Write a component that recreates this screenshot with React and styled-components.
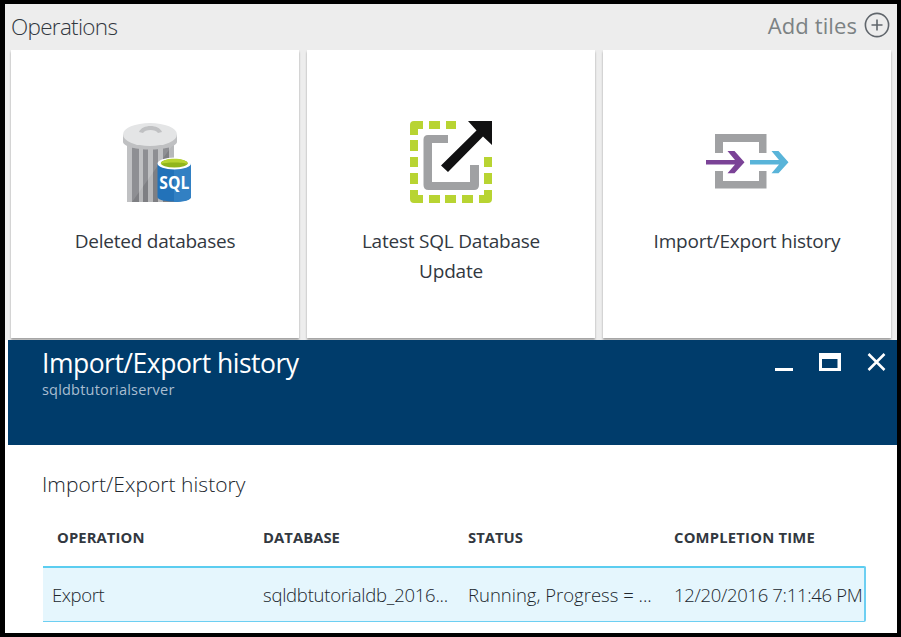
import React from 'react';
import styled, { createGlobalStyle } from 'styled-components';

const GlobalStyle = createGlobalStyle`
  * { box-sizing: border-box; }
  body { margin: 0; background: #000; font-family: "Open Sans", "Noto Sans", sans-serif; color: #32383f; }
`;

const Frame = styled.main`
  width: 901px;
  height: 637px;
  padding: 4px 4px 4px 5px;
  background: #000;
  overflow: hidden;
`;

const Screen = styled.div`
  height: 629px;
  display: flex;
  flex-direction: column;
  background: #fff;
`;

const Dashboard = styled.section`
  height: 336px;
  padding: 0 6px;
  background: #ededed;
  overflow: hidden;
`;

const Toolbar = styled.header`
  height: 46px;
  display: flex;
  justify-content: space-between;
  align-items: center;
`;

const Label = styled.span`
  display: block;
  white-space: nowrap;
  font-size: ${(p) => p.$size}px;
  line-height: ${(p) => p.$line || 30}px;
  font-weight: ${(p) => p.$weight || 400};
  letter-spacing: ${(p) => p.$track || 0}px;
  color: ${(p) => p.$color || '#32383f'};
`;

const AddTiles = styled.button`
  display: flex;
  align-items: center;
  gap: 7px;
  padding: 0;
  margin: -4px 1px 0 0;
  border: 0;
  background: none;
  font-family: inherit;
`;

const Tiles = styled.div`
  display: grid;
  grid-template-columns: repeat(3, 288px);
  gap: 8px;
`;

const Tile = styled.article`
  height: 288px;
  padding-top: 69px;
  display: flex;
  flex-direction: column;
  align-items: center;
  background: #fff;
  box-shadow: 0 2px 2px rgba(0, 0, 0, 0.32);
`;

const TileIcon = styled.div`
  height: 107px;
  svg { display: block; }
`;

const BladeHeader = styled.header`
  height: 105px;
  margin-left: 3px;
  padding: 7px 10px 0 34px;
  display: flex;
  justify-content: space-between;
  background: #003c6b;
`;

const WindowControls = styled.div`
  display: flex;
  align-items: flex-start;
  gap: 25px;
  padding-top: 5px;
`;

const Blade = styled.section`
  padding: 24px 31px 0 37px;
`;

const Table = styled.div`
  margin: 23px 0 0 1px;
`;

const HeadRow = styled.div`
  height: 44px;
  padding-left: 14px;
  display: grid;
  grid-template-columns: 206px 205px 206px 1fr;
`;

const DataRow = styled.div`
  height: 56px;
  padding: 12px 0 0 9px;
  display: grid;
  grid-template-columns: 211px 205px 206px 1fr;
  background: #e5f6fd;
  border: solid #6dcff2;
  border-width: 2px 2px 1px 0;
  border-top-color: #5bcdf0;
  border-radius: 0 2px 2px 0;
`;

const TrashIcon = () => (
  <svg width="72" height="84" viewBox="119 119 72 84">
    <path d="M127 141h47v61h-47z" fill="#7e7f83" />
    <path d="M127 141h5v61h-5zM139 147h4v55h-4zM148 148h5v54h-5zM158 147h5v55h-5zM169 141h5v20h-5z" fill="#b7b8ba" />
    <path d="M127 141h47v2l-42 59h-5z" fill="#fff" opacity=".13" />
    <path d="M123 135v7c2 10 52 10 54 0v-7z" fill="#bfc0c2" />
    <ellipse cx="150" cy="134.5" rx="27" ry="11.5" fill="#e4e5e6" />
    <path d="M139 132c3-8 20-8 23 0l-4 1c-2-4-13-4-15 0z" fill="#c0c1c3" />
    <path d="M157.500 163v34c0 6 33.500 6 33.500 0v-34z" fill="#2272b9" />
    <path d="M174 163h17v34c0 3-7 5-17 5z" fill="#3280c3" />
    <ellipse cx="174.3" cy="163.5" rx="16.700" ry="6" fill="#fff" />
    <ellipse cx="174.3" cy="163.2" rx="13.500" ry="4.200" fill="#91b51b" />
    <path d="M161 164c0-7 26.500-7 26.500 0-5-2-21.500-2-26.500 0z" fill="#b8d432" />
    <text x="174.3" y="189" textAnchor="middle" textLength="30" lengthAdjust="spacingAndGlyphs" fontSize="17" fontWeight="700" fill="#fff">SQL</text>
  </svg>
);

const UpdateIcon = () => (
  <svg width="84" height="84" viewBox="409 119 84 84">
    <g fill="#b8d432">
      <path d="M423 121h-9q-4 0-4 4v10h8v-6h5zM429 121h11v8h-11zM446 121h10v8h-10z" />
      <path d="M410 140h8v11h-8zM410 157h8v10h-8zM410 173h8v11h-8zM410 190h8v5h5v8h-9q-4 0-4-4z" />
      <path d="M429 195h11v8h-11zM445 195h11v8h-11zM462 195h11v8h-11zM484 190h8v9q0 4-4 4h-9v-8h5zM484 157h8v10h-8zM484 173h8v11h-8z" />
    </g>
    <path d="M448 135h-20q-4.500 0-4.500 4.500v45.500q0 5 5 5h45.500q5 0 5-5v-20h-9v17h-38v-39h16z" fill="#a0a1a3" />
    <path d="M468 121h24v24l-9-8.500-35 35.500-7-6.500 35.500-35z" fill="#111112" />
  </svg>
);

const TransferIcon = () => (
  <svg width="84" height="84" viewBox="705 119 84 84">
    <path d="M715 153v-19h51.500v19h-7.500v-11h-36v11zM715 171v17.500h51.500V171h-7.500v10h-36v-10z" fill="#a0a1a3" />
    <path d="M706 160h29l-7.500-9h7l10 11.300-10 11h-7l7.500-8.800h-29z" fill="#7b4397" />
    <path d="M750 160h29l-7.500-9h7l10 11.300-10 11h-7l7.500-8.800h-29z" fill="#59b4d9" />
  </svg>
);

const PlusIcon = () => (
  <svg width="26" height="26" viewBox="0 0 26 26" fill="none" stroke="#60666c" strokeWidth="1.600">
    <circle cx="13" cy="13" r="11.600" />
    <path d="M7.500 13h11M13 7.500v11" />
  </svg>
);

const MinimizeIcon = () => (
  <svg width="18" height="20"><path d="M0 16h18v3H0z" fill="#fff" /></svg>
);

const MaximizeIcon = () => (
  <svg width="23" height="20"><path fillRule="evenodd" d="M1 1h22v18H1zM4 7v9h15.500V7z" fill="#fff" /></svg>
);

const CloseIcon = () => (
  <svg width="21" height="20"><path d="M2.500 2l16 16M18.500 2l-16 16" stroke="#fff" strokeWidth="2.500" /></svg>
);

export default function App() {
  return (
    <Frame>
      <GlobalStyle />
      <Screen>
        <Dashboard>
          <Toolbar>
            <Label $size={22.5} $weight={300} $track={-0.7}>Operations</Label>
            <AddTiles>
              <Label $size={22} $track={0.1} $color="#7c8284">Add tiles</Label>
              <PlusIcon />
            </AddTiles>
          </Toolbar>
          <Tiles>
            <Tile>
              <TileIcon><TrashIcon /></TileIcon>
              <Label $size={19} $track={-0.22}>Deleted databases</Label>
            </Tile>
            <Tile>
              <TileIcon><UpdateIcon /></TileIcon>
              <Label $size={19} $track={-0.22}>Latest SQL Database</Label>
              <Label $size={19} $track={-0.22}>Update</Label>
            </Tile>
            <Tile>
              <TileIcon><TransferIcon /></TileIcon>
              <Label $size={19} $track={-0.22}>Import/Export history</Label>
            </Tile>
          </Tiles>
        </Dashboard>
        <BladeHeader>
          <div>
            <Label $size={26.5} $line={33} $track={-0.5} $color="#fff">Import/Export history</Label>
            <Label $size={14.5} $line={20} $track={0.2} $color="#a9bed1">sqldbtutorialserver</Label>
          </div>
          <WindowControls>
            <MinimizeIcon />
            <MaximizeIcon />
            <CloseIcon />
          </WindowControls>
        </BladeHeader>
        <Blade>
          <Label $size={21} $weight={300} $track={0.04} $color="#20262d">Import/Export history</Label>
          <Table>
            <HeadRow>
              <Label $size={14.8} $weight={700} $track={0.1}>OPERATION</Label>
              <Label $size={14.8} $weight={700} $track={0.05}>DATABASE</Label>
              <Label $size={14.8} $weight={700}>STATUS</Label>
              <Label $size={14.8} $weight={700} $track={0.2}>COMPLETION TIME</Label>
            </HeadRow>
            <DataRow>
              <Label $size={18.5} $weight={300} $track={-0.4} $color="#20262d">Export</Label>
              <Label $size={18.5} $weight={300} $track={-0.24} $color="#20262d">sqldbtutorialdb_2016...</Label>
              <Label $size={18.5} $weight={300} $color="#20262d">Running, Progress = ...</Label>
              <Label $size={18.5} $weight={300} $track={-0.32} $color="#20262d">12/20/2016 7:11:46 PM</Label>
            </DataRow>
          </Table>
        </Blade>
      </Screen>
    </Frame>
  );
}
